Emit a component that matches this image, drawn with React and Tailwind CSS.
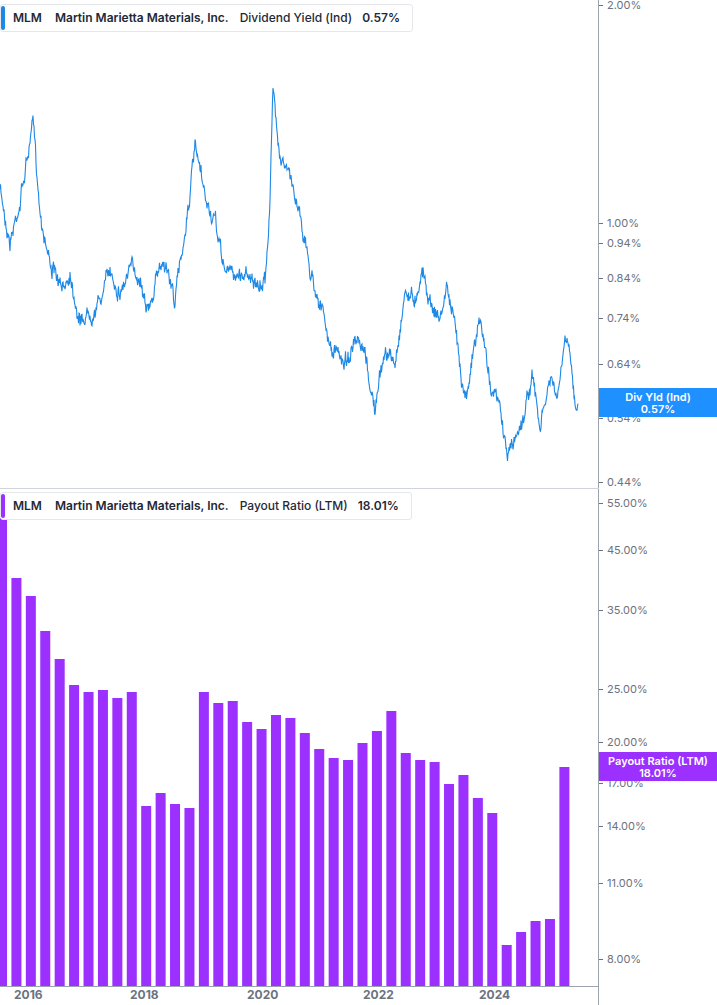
import React from "react";

const keys=[[0,190],[10,240],[20,200],[33,125],[40,210],[50,260],[62,295],[70,270],[80,320],[90,310],[100,300],[110,270],[120,290],[130,270],[140,275],[150,310],[160,265],[165,260],[175,300],[185,230],[195,150],[205,200],[215,225],[225,270],[240,275],[250,270],[258,295],[265,280],[270,200],[273,90],[280,150],[290,180],[300,210],[310,270],[320,300],[330,350],[345,360],[355,345],[365,360],[375,410],[385,350],[395,365],[405,290],[415,300],[422,265],[430,300],[440,320],[447,285],[455,330],[465,395],[470,370],[480,320],[490,380],[500,410],[507,455],[515,440],[525,410],[532,375],[540,430],[550,380],[558,400],[565,340],[570,360],[575,405],[578,395]];
function linePath(){let s=7;const r=()=>{s=(s*16807)%2147483647;return s/2147483647;};let d="";let prev=0;
for(let x=0;x<=578;x+=0.5){let i=0;while(i<keys.length-2&&keys[i+1][0]<x)i++;const[a,b]=[keys[i],keys[i+1]];const t=Math.min(1,Math.max(0,(x-a[0])/(b[0]-a[0])));let y=a[1]+(b[1]-a[1])*t;prev=prev*0.85+(r()-0.5)*9;y+=prev+(r()-0.5)*9;d+=(d?"L":"M")+x.toFixed(1)+","+y.toFixed(1);}return d;}
const bars=[518,578,596,631,659,685,692,690,698,692,806,793,804,808,692,703,701,722,729,715,718,733,749,758,760,743,731,711,753,760,762,784,775,798,813,945,932,921,919,767];
const topTicks=[["2.00%",5],["1.00%",223],["0.94%",243],["0.84%",278],["0.74%",318],["0.64%",364],["0.54%",418],["0.44%",482]];
const botTicks=[["55.00%",503],["45.00%",550],["35.00%",610],["25.00%",689],["20.00%",742],["17.00%",783],["14.00%",826],["11.00%",883],["8.00%",959]];
const years=[["2016",29],["2018",145],["2020",262],["2022",378],["2024",494]];
const font={fontFamily:"Inter, 'Liberation Sans', sans-serif"};

function Legend({color,ticker,name,metric,val}){return(
<div className="absolute left-0 top-[4px] flex items-center whitespace-nowrap h-[28px] bg-white border border-[#e5e7eb] rounded-[3px] pr-3 text-[12px] font-semibold text-[#1f2937]">
<div className="w-[4px] h-[24px] rounded-sm mr-2" style={{background:color}}/>
<span className="mr-[13px]">{ticker}</span><span className="mr-[11px]">{name}</span><span className="mr-[10px] font-medium">{metric}</span><span>{val}</span></div>);}

export default function App(){return(
<div className="relative w-[717px] h-[1005px] bg-white overflow-hidden" style={font}>
<div className="flex">
<div className="relative w-[599px] h-[1005px] border-r border-[#9ca3af]">
<svg width="599" height="987" className="absolute left-0 top-0">
<path d={linePath()} fill="none" stroke="#1e88e5" strokeWidth="1.1"/>
<line x1="0" y1="488.5" x2="599" y2="488.5" stroke="#d1d5db"/>
{bars.map((t,i)=><rect key={i} x={i*14.42-3} y={t} width="10" height={987-t} fill="#9b30ff"/>)}
<line x1="0" y1="987" x2="599" y2="987" stroke="#9ca3af" strokeWidth="2"/>
{years.map(([y,x])=><line key={y} x1={x} y1="987" x2={x} y2="992" stroke="#9ca3af"/>)}
</svg>
<div className="absolute left-0 top-0"><Legend color="#1e88e5" ticker="MLM" name="Martin Marietta Materials, Inc." metric="Dividend Yield (Ind)" val="0.57%"/></div>
<div className="absolute left-0 top-[488px]"><Legend color="#9b30ff" ticker="MLM" name="Martin Marietta Materials, Inc." metric="Payout Ratio (LTM)" val="18.01%"/></div>
{years.map(([y,x])=><span key={y} className="absolute text-[12px] font-bold text-[#6b7280]" style={{left:x-15,top:986}}>{y}</span>)}
</div>
<div className="relative flex-1 text-[11px] text-[#6b7280]">
{[...topTicks,...botTicks].map(([l,y])=><div key={l} className="absolute left-0 flex items-center leading-[14px]" style={{top:Math.max(-2,y-7)}}><span className="w-[4px] h-px bg-[#6b7280] mr-[4px]"/>{l}</div>)}
<div className="absolute left-0 top-[388px] w-[118px] h-[29px] bg-[#1e90ff] text-white text-[11px] font-semibold leading-[12px] flex flex-col items-center justify-center"><span>Div Yld (Ind)</span><span>0.57%</span></div>
<div className="absolute left-0 top-[752px] w-[118px] h-[29px] bg-[#9b30ff] text-white text-[11px] font-semibold leading-[12px] flex flex-col items-center justify-center"><span>Payout Ratio (LTM)</span><span>18.01%</span></div>
</div>
</div>
</div>);}
